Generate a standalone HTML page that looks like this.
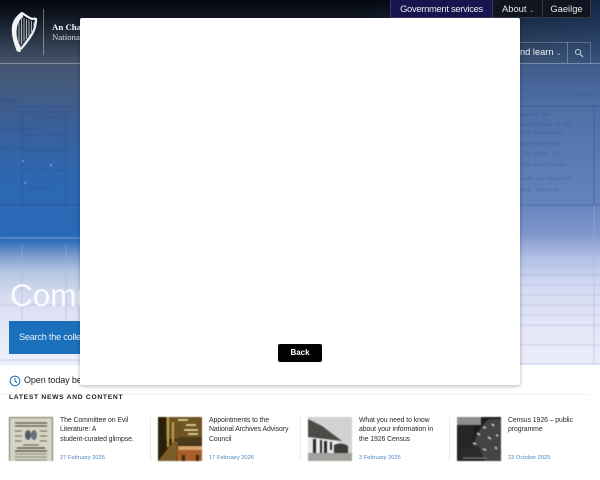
<!DOCTYPE html>
<html lang="en">
<head>
<meta charset="utf-8">
<title>National Archives</title>
<style>
html,body{margin:0;padding:0;background:#fff}
body{width:600px;height:480px;overflow:hidden;position:relative;font-family:"Liberation Sans",sans-serif;color:#222}
.abs{position:absolute;white-space:nowrap}
#hero{position:absolute;left:0;top:0;width:600px;height:365px;overflow:hidden;background:#3f5f8f}
#top{position:absolute;left:0;top:0;width:600px;height:64px;background:linear-gradient(180deg,#04060b 0,#0d1420 14px,#25303f 35px,#465670 64px)}
#top2{position:absolute;left:0;top:0;width:600px;height:64px;background:linear-gradient(90deg,rgba(40,80,140,0) 60%,rgba(40,80,140,.45));}
#hl{position:absolute;left:0;top:64px;width:90px;height:301px;background:linear-gradient(180deg,#46566f 0,#425c86 30px,#38619e 70px,#2e67b0 110px,#2a69b8 170px,#2c6cb9 176px,#7c9dcc 192px,#b5c6e2 208px,#d6dcf0 232px,#e7e8f7 270px,#eef0fb 301px)}
#hr{position:absolute;left:510px;top:64px;width:90px;height:301px;background:linear-gradient(180deg,#3f5b8a 0,#4e6fa4 40px,#587ab2 90px,#6583bd 140px,#7f97cb 170px,#b4c3e6 195px,#d7dcf3 225px,#e6e7f8 270px,#ecedfb 301px)}
.tab{position:absolute;top:0;height:18px;box-sizing:border-box;border:1px solid rgba(255,255,255,.16);border-top:0;color:#e8ebf0;font-size:9.4px;line-height:17px;text-align:center}
#modal{position:absolute;left:80px;top:18px;width:440px;height:367px;background:#fff;border-radius:2px;box-shadow:0 1px 4px rgba(0,0,0,.3)}
#back{position:absolute;left:198px;top:326px;width:44px;height:18px;background:#000;border-radius:2px;color:#fff;font-size:8px;font-weight:bold;line-height:18px;text-align:center}
.t{position:absolute;top:416px;font-size:6.9px;line-height:9.4px;color:#2a2a2a;white-space:nowrap;letter-spacing:-.07px}
.d{position:absolute;top:454px;font-size:5.7px;line-height:9px;color:#4a86be;white-space:nowrap}
.sep{position:absolute;top:417px;width:1px;height:44px;background:#ebebeb}
.th{position:absolute;top:417px;width:44px;height:44px;display:block;filter:blur(.45px)}
</style>
</head>
<body>
<div id="hero">
<div id="top"></div><div id="top2"></div><div id="hl"></div><div id="hr"></div>
<svg class="abs" style="left:0;top:60px;filter:blur(.5px)" width="600" height="305" viewBox="0 60 600 305">
<g stroke="#2a4a8c" stroke-opacity=".45" fill="none" stroke-width="1">
<path d="M0 107H80M520 106H600M520 205H600M0 205H80M0 71H80"/>
<path d="M22 110V205M66 110V205M594 105V205"/>
</g>
<g stroke="#a9b4e4" stroke-opacity=".5" fill="none" stroke-width="1">
<path d="M520 305H600M0 305H80M520 245H600M520 255H600M520 265H600M520 275H600M520 285H600M520 295H600M520 315H600M520 325H600M520 345H600M520 364H600M0 360H80"/>
<path d="M22 245V320M66 245V320M594 205V365"/>
</g>
<path d="M0 238H80" stroke="#bcd0e8" stroke-opacity=".6"/>
<g fill="#264684" fill-opacity=".5" font-family="Liberation Mono,monospace" font-size="4.6">
<text x="0" y="103" font-size="6" font-weight="bold">NTIAL</text>
<text x="22" y="113">Number of Census</text>
<text x="30" y="118">of Household</text>
<text x="0" y="130">particulars of</text><text x="24" y="136">persons sleeping</text>
<text x="0" y="150">the entire house</text><text x="28" y="152">and members of</text>
<text x="26" y="172">the return and</text>
<text x="30" y="190">and Form</text>
<text x="522" y="116">mplete the</text>
<text x="522" y="126">particulars of all</text>
<text x="522" y="134">the individuals</text>
<text x="522" y="145">When you have</text>
<text x="522" y="155">The Census of</text>
<text x="522" y="166">the entire house</text>
<text x="522" y="180">with the return of</text>
<text x="522" y="191">H.M. and Form</text>
<text x="570" y="96">The Return</text>
</g>
<g fill="#cfe0f6"><circle cx="23" cy="161" r=".7"/><circle cx="51" cy="165" r=".8"/><circle cx="25" cy="183" r=".7"/></g>
</svg>
<div class="abs" style="left:0;top:63px;width:600px;height:1px;background:rgba(255,255,255,.32)"></div>
<svg class="abs" style="left:10px;top:11px;filter:blur(.3px)" width="28" height="42" viewBox="0 0 28 42" fill="none" stroke="#f2f4f6">
<path d="M12 1C7 4 2 10 2 18c0 8 2 14 5 22l3 1c2-3 0-6-2-10C6 25 6 20 7 15c1-4 3-7 6-9z" fill="#f2f4f6" stroke-width=".5"/>
<path d="M12 2c3 2 7 5 10 6 1 0 2-1 4 0 0 5-1 10-4 15-3 5-7 10-11 15" stroke-width="2.2"/>
<path d="M9 11V31M11.5 8V33M14 7V30M16.5 8V28M19 9V25M21.5 10V21M24 11V16" stroke-width=".8" stroke-opacity=".85"/>
</svg>
<div class="abs" style="left:43px;top:9px;width:1px;height:46px;background:rgba(255,255,255,.38)"></div>
<div class="abs" style="left:52px;top:22px;font:bold 8.8px/11px 'Liberation Serif',serif;color:#f5f6f8">An Chartlann Náisiúnta</div>
<div class="abs" style="left:52px;top:32px;font:8.8px/11px 'Liberation Serif',serif;color:#d9dde4">National Archives</div>
<div class="tab" style="left:390px;width:103px;background:#17144f;letter-spacing:-.3px">Government services</div>
<div class="tab" style="left:493px;width:50px;background:#10151f;border-left:0;text-align:left;padding-left:9px">About <span style="font-size:6px;opacity:.7">&#8964;</span></div>
<div class="tab" style="left:542px;width:49px;background:#10151f">Gaeilge</div>
<div class="abs" style="left:470px;top:42px;width:121px;height:22px;box-sizing:border-box;border:1px solid rgba(255,255,255,.22);border-bottom:0"></div>
<div class="abs" style="left:567px;top:42px;width:1px;height:21px;background:rgba(255,255,255,.28)"></div>
<div class="abs" style="left:490px;top:46px;font-size:9.3px;line-height:13px;color:#eef0f4">Read and learn <span style="font-size:6px;opacity:.8">&#8964;</span></div>
<svg class="abs" style="left:574px;top:48px" width="10" height="10" viewBox="0 0 10 10" fill="none" stroke="#c9d2e0" stroke-width=".9"><circle cx="4" cy="4" r="2.6"/><path d="M6 6L9 9" stroke-width="1.2"/></svg>
<div class="abs" style="left:10px;top:276px;font-size:31.5px;line-height:38px;color:rgba(255,255,255,.88)">Committee</div>
<div class="abs" style="left:9px;top:321px;width:120px;height:33px;background:#1b70bb"></div>
<div class="abs" style="left:19px;top:331px;font-size:9.2px;line-height:13px;color:#e4f0fa;letter-spacing:-.25px">Search the collections</div>
</div>
<svg class="abs" style="left:9px;top:375px" width="12" height="12" viewBox="0 0 12 12" fill="none" stroke="#2f77b6" stroke-width="1.1"><circle cx="6" cy="6" r="4.8"/><path d="M6 3V6.3L8.2 7.6"/></svg>
<div class="abs" style="left:24px;top:374px;font-size:9px;line-height:13px;color:#222;letter-spacing:-.1px">Open today between</div>
<div class="abs" style="left:0;top:394px;width:590px;height:1px;background:#f3f3f3"></div>
<div class="abs" style="left:9px;top:393px;font-size:6.7px;line-height:10px;font-weight:bold;letter-spacing:.72px;color:#1c1c1c">LATEST NEWS AND CONTENT</div>

<svg class="th" style="left:9px" viewBox="0 0 44 44"><rect width="44" height="44" fill="#77776c"/><rect x="1" y="1" width="42" height="43" fill="#d6d4c2"/><path d="M6 6H38M6 9H38" stroke="#55554c" stroke-width="1.2"/><path d="M6 14H13M31 14H38M6 19H13M31 19H38M6 24H13M31 24H38" stroke="#66665c" stroke-width="1"/><ellipse cx="19" cy="18" rx="3" ry="5" fill="#555a66"/><ellipse cx="25" cy="18" rx="3" ry="5" fill="#6a6f78"/><path d="M14 28H30" stroke="#55554c"/><path d="M8 31H36M6 34H38" stroke="#444" stroke-width="1.3"/><path d="M6 37H38M6 40H38M6 43H38" stroke="#88887c" stroke-width="1.1"/></svg>
<div class="t" style="left:60px">The Committee on Evil<br>Literature: A<br>student-curated glimpse.</div>
<div class="d" style="left:60px">27 February 2026</div>
<div class="sep" style="left:150px"></div>

<svg class="th" style="left:158px" viewBox="0 0 44 44"><rect width="44" height="44" fill="#3a2a10"/><rect x="6" y="0" width="38" height="22" fill="#6e5420"/><path d="M0 0H8V44H0z" fill="#2a200c"/><path d="M20 3H30M28 8H38M26 13H40M30 17H40" stroke="#efe5b8" stroke-width="1.4"/><path d="M10 0V30M15 5V28" stroke="#bfa552" stroke-width="2"/><rect x="20" y="20" width="24" height="8" fill="#4d3a1a"/><path d="M0 44L16 24H20L18 44z" fill="#7a5c26"/><rect x="19" y="33" width="25" height="11" fill="#a85e2c"/><rect x="20" y="29" width="24" height="4" fill="#d8a46e"/><rect x="24" y="38" width="3" height="6" fill="#3a2a10"/><rect x="38" y="38" width="3" height="6" fill="#3a2a10"/></svg>
<div class="t" style="left:209px">Appointments to the<br>National Archives Advisory<br>Council</div>
<div class="d" style="left:209px">17 February 2026</div>
<div class="sep" style="left:300px"></div>

<svg class="th" style="left:308px" viewBox="0 0 44 44"><rect width="44" height="44" fill="#d2d2d0"/><path d="M0 2L14 9 34 24 0 20z" fill="#4b4b48"/><path d="M0 20L30 24V36H0z" fill="#e8e8e6"/><path d="M5 22h3v15H5zM12 23h2v13h-2zM16 24h3v12h-3zM22 25h2v8h-2z" fill="#2a2a2a"/><path d="M26 28c4-2 10-2 14 1v7H26z" fill="#3a3a38"/><rect x="0" y="36" width="44" height="8" fill="#a2a29e"/></svg>
<div class="t" style="left:359px">What you need to know<br>about your information in<br>the 1926 Census</div>
<div class="d" style="left:359px">3 February 2026</div>
<div class="sep" style="left:449px"></div>

<svg class="th" style="left:457px" viewBox="0 0 44 44"><rect width="44" height="44" fill="#1c1c1c"/><rect x="0" y="0" width="24" height="8" fill="#8e8e8e"/><path d="M1 8V40H16V8" fill="#262626"/><path d="M18 44C12 30 20 12 32 2l12 0V44z" fill="#444"/><path d="M0 44C4 30 14 26 22 30L28 44z" fill="#2a2a2a"/><path d="M20 16l3 2M26 10l3 1M35 7l2 2M16 26l3 1M31 20l3 2M39 18l2 1M26 32l3 1M38 30l2 2" stroke="#d6d6d6" stroke-width="1.6"/><path d="M6 41H30" stroke="#888" stroke-width="1"/></svg>
<div class="t" style="left:508px">Census 1926 – public<br>programme</div>
<div class="d" style="left:508px">23 October 2025</div>

<div id="modal"><div id="back">Back</div></div>
</body>
</html>
